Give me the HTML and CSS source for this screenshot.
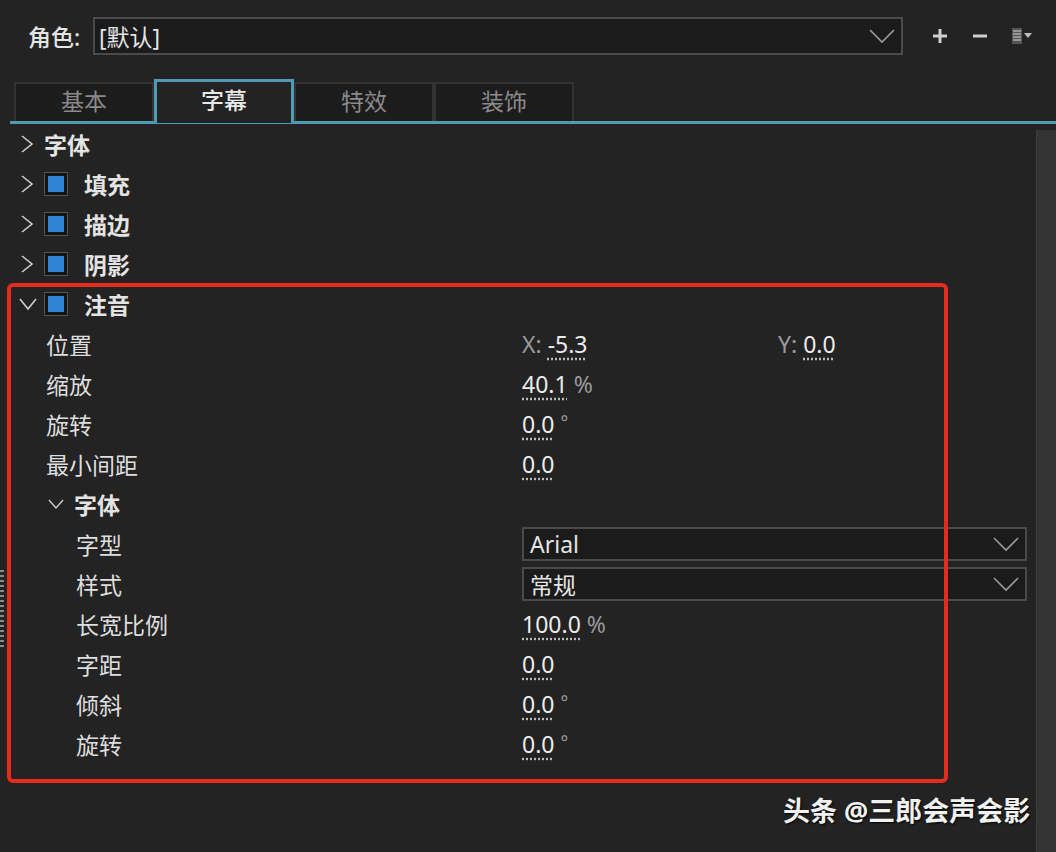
FILE: index.html
```html
<!DOCTYPE html>
<html>
  <head>
    <meta charset="UTF-8">
    <title>注音</title>
    <link rel="stylesheet" href="styles.css">
  </head>
  <body>
    <div class="role-row">
      <span class="role-label">角色:</span>
      <div class="select role-select">
        <span>[默认]</span>
        <svg class="caret" width="26" height="16" viewBox="0 0 26 16"><path d="M1 2 L13 14 L25 2" fill="none" stroke="#9a9a9a" stroke-width="1.6"/></svg>
      </div>
      <div class="tools">
        <svg width="18" height="18" viewBox="0 0 18 18"><path d="M9 2 V16 M2 9 H16" stroke="#cfcfcf" stroke-width="3"/></svg>
        <svg width="18" height="18" viewBox="0 0 18 18"><path d="M2 9 H16" stroke="#cfcfcf" stroke-width="3"/></svg>
        <svg width="24" height="20" viewBox="0 0 24 20"><rect x="1" y="2" width="10" height="16" fill="#555"/><path d="M2 5 H10 M2 8 H10 M2 11 H10 M2 14 H10" stroke="#aaa" stroke-width="1.4"/><path d="M13 7 L21 7 L17 12 Z" fill="#bbb"/></svg>
      </div>
    </div>

    <div class="tabs">
      <div class="tab">基本</div>
      <div class="tab active">字幕</div>
      <div class="tab">特效</div>
      <div class="tab">装饰</div>
    </div>

    <div class="panel">
      <div class="tree">
        <div class="row lvl0">
          <svg class="chev" width="14" height="20" viewBox="0 0 14 20"><path d="M2 2 L12 10 L2 18" fill="none" stroke="#cfcfcf" stroke-width="1.6"/></svg>
          <span class="head">字体</span>
        </div>
        <div class="row lvl0">
          <svg class="chev" width="14" height="20" viewBox="0 0 14 20"><path d="M2 2 L12 10 L2 18" fill="none" stroke="#cfcfcf" stroke-width="1.6"/></svg>
          <span class="check"><i></i></span>
          <span class="head">填充</span>
        </div>
        <div class="row lvl0">
          <svg class="chev" width="14" height="20" viewBox="0 0 14 20"><path d="M2 2 L12 10 L2 18" fill="none" stroke="#cfcfcf" stroke-width="1.6"/></svg>
          <span class="check"><i></i></span>
          <span class="head">描边</span>
        </div>
        <div class="row lvl0">
          <svg class="chev" width="14" height="20" viewBox="0 0 14 20"><path d="M2 2 L12 10 L2 18" fill="none" stroke="#cfcfcf" stroke-width="1.6"/></svg>
          <span class="check"><i></i></span>
          <span class="head">阴影</span>
        </div>
        <div class="row lvl0">
          <svg class="chev down" width="20" height="14" viewBox="0 0 20 14"><path d="M2 2 L10 12 L18 2" fill="none" stroke="#cfcfcf" stroke-width="1.6"/></svg>
          <span class="check"><i></i></span>
          <span class="head">注音</span>
        </div>

        <div class="row prop lvl1">
          <span class="label">位置</span>
          <span class="val"><span class="dim">X:</span> <u>-5.3</u></span>
          <span class="val"><span class="dim">Y:</span> <u>0.0</u></span>
        </div>
        <div class="row prop lvl1">
          <span class="label">缩放</span>
          <span class="val"><u>40.1</u> <span class="dim">%</span></span>
        </div>
        <div class="row prop lvl1">
          <span class="label">旋转</span>
          <span class="val"><u>0.0</u> <span class="dim deg">°</span></span>
        </div>
        <div class="row prop lvl1">
          <span class="label">最小间距</span>
          <span class="val"><u>0.0</u></span>
        </div>
        <div class="row lvl1b">
          <svg class="chev small" width="16" height="12" viewBox="0 0 16 12"><path d="M1 2 L8 10 L15 2" fill="none" stroke="#cfcfcf" stroke-width="1.4"/></svg>
          <span class="head">字体</span>
        </div>
        <div class="row prop lvl2">
          <span class="label">字型</span>
          <div class="select field"><span class="latin">Arial</span>
            <svg class="caret" width="26" height="16" viewBox="0 0 26 16"><path d="M1 2 L13 14 L25 2" fill="none" stroke="#9a9a9a" stroke-width="1.6"/></svg>
          </div>
        </div>
        <div class="row prop lvl2">
          <span class="label">样式</span>
          <div class="select field"><span>常规</span>
            <svg class="caret" width="26" height="16" viewBox="0 0 26 16"><path d="M1 2 L13 14 L25 2" fill="none" stroke="#9a9a9a" stroke-width="1.6"/></svg>
          </div>
        </div>
        <div class="row prop lvl2">
          <span class="label">长宽比例</span>
          <span class="val"><u>100.0</u> <span class="dim">%</span></span>
        </div>
        <div class="row prop lvl2">
          <span class="label">字距</span>
          <span class="val"><u>0.0</u></span>
        </div>
        <div class="row prop lvl2">
          <span class="label">倾斜</span>
          <span class="val"><u>0.0</u> <span class="dim deg">°</span></span>
        </div>
        <div class="row prop lvl2">
          <span class="label">旋转</span>
          <span class="val"><u>0.0</u> <span class="dim deg">°</span></span>
        </div>
      </div>
      <div class="scrollbar"></div>
    </div>

    <div class="grip"></div>
    <div class="highlight"></div>
    <div class="watermark">头条 @三郎会声会影</div>
  </body>
</html>
```

FILE: styles.css
```css
body {
  margin: 0;
  height: 852px;
  overflow: hidden;
  background: #232323;
  color: #e4e4e4;
  font-family: "Noto Sans", "Noto Sans CJK SC", sans-serif;
  font-size: 23px;
  position: relative;
}

.role-row {
  display: flex;
  align-items: center;
  height: 38px;
  padding: 17px 0 0 28px;
}

.role-label {
  width: 65px;
  font-weight: 500;
}

.select {
  display: flex;
  align-items: center;
  justify-content: space-between;
  box-sizing: border-box;
  background: #1b1b1b;
  border: 2px solid #4a4a4a;
  padding: 0 6px 0 4px;
}

.role-select {
  width: 810px;
  height: 38px;
}

.tools {
  display: flex;
  align-items: center;
  gap: 22px;
  margin-left: 28px;
}

.tabs {
  display: flex;
  margin-top: 25px;
  margin-left: 10px;
  height: 41px;
  padding-left: 4px;
  border-bottom: 3px solid #4f9bb4;
}

.tab {
  box-sizing: border-box;
  width: 140px;
  height: 39px;
  margin-top: 2px;
  background: #1c1c1c;
  border: 2px solid #333;
  border-bottom: none;
  color: #8a8a8a;
  text-align: center;
  line-height: 34px;
}

.tab.active {
  height: 44px;
  margin-top: -1px;
  background: #232323;
  border: 3px solid #4f9bb4;
  border-bottom: none;
  color: #e8e8e8;
  font-weight: 500;
  line-height: 36px;
}

.panel {
  display: flex;
}

.tree {
  flex: 1;
}

.scrollbar {
  width: 19px;
  margin-top: 6px;
  height: 730px;
  background: #333;
  border-left: 1px solid #3c3c3c;
}

.row {
  display: flex;
  align-items: center;
  height: 40px;
}

.lvl0 {
  padding-left: 20px;
}

.chev {
  flex: none;
  margin-right: 10px;
}

.chev.down {
  margin-left: -2px;
  margin-right: 6px;
}

.head {
  font-weight: 700;
}

.check {
  box-sizing: border-box;
  width: 24px;
  height: 24px;
  margin-right: 16px;
  border: 1px solid #555;
  background: #151515;
  display: flex;
  align-items: center;
  justify-content: center;
}

.check i {
  width: 16px;
  height: 16px;
  background: #3183d6;
}

.prop {
  display: grid;
  grid-template-columns: 476px 256px 1fr;
  padding-left: 46px;
}

.lvl2 {
  grid-template-columns: 446px 505px;
  padding-left: 76px;
}

.lvl1b {
  padding-left: 48px;
}

.chev.small {
  margin-right: 10px;
}

.label {
  color: #dedede;
}

.val u {
  text-decoration: underline dotted #bbb;
  text-underline-offset: 5px;
  color: #ececec;
}

.dim {
  color: #9a9a9a;
}

.deg {
  vertical-align: 4px;
  font-size: 18px;
}

.field {
  height: 34px;
  padding-left: 6px;
}

.latin {
  font-family: "Noto Sans", sans-serif;
}

.grip {
  position: absolute;
  left: 0;
  top: 570px;
  width: 4px;
  height: 80px;
  background: repeating-linear-gradient(#8a8a8a 0 2px, transparent 2px 5px);
}

.highlight {
  position: absolute;
  left: 7px;
  top: 283px;
  width: 933px;
  height: 492px;
  border: 4px solid #e52b1d;
  border-radius: 6px;
}

.watermark {
  position: absolute;
  left: 783px;
  top: 790px;
  color: #f2f2f2;
  font-weight: 700;
  font-size: 27px;
  text-shadow: 1px 1px 2px #000;
}
```
